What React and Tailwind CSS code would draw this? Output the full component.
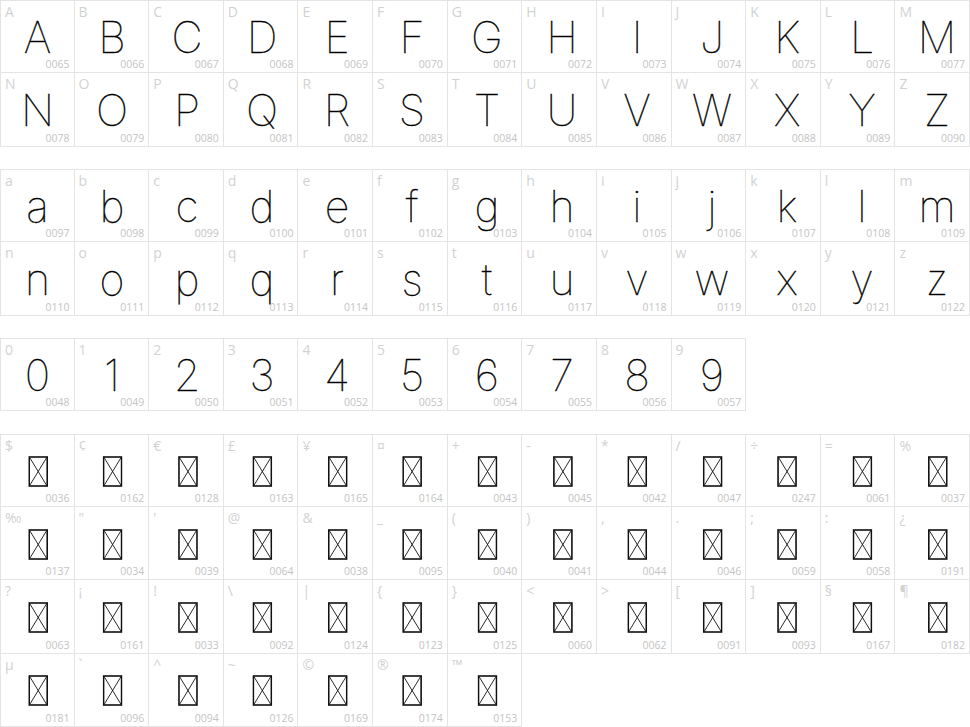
import React from "react";

const upper = "ABCDEFGHIJKLMNOPQRSTUVWXYZ".split("").map((c) => ({ l: c, g: c, code: c.charCodeAt(0) }));
const lower = "abcdefghijklmnopqrstuvwxyz".split("").map((c) => ({ l: c, g: c, code: c.charCodeAt(0) }));
const digits = "0123456789".split("").map((c) => ({ l: c, g: c, code: c.charCodeAt(0) }));
const symbolsRaw = [
  ["$", 36], ["¢", 162], ["€", 128], ["£", 163], ["¥", 165], ["¤", 164], ["+", 43], ["-", 45], ["*", 42], ["/", 47], ["÷", 247], ["=", 61], ["%", 37],
  ["‰", 137], ['"', 34], ["'", 39], ["@", 64], ["&", 38], ["_", 95], ["(", 40], [")", 41], [",", 44], [".", 46], [";", 59], [":", 58], ["¿", 191],
  ["?", 63], ["¡", 161], ["!", 33], ["\\", 92], ["|", 124], ["{", 123], ["}", 125], ["<", 60], [">", 62], ["[", 91], ["]", 93], ["§", 167], ["¶", 182],
  ["µ", 181], ["`", 96], ["^", 94], ["~", 126], ["©", 169], ["®", 174], ["™", 153],
];
const symbols = symbolsRaw.map(([l, code]) => ({ l, g: null, code }));

const pad = (n) => String(n).padStart(4, "0");

function NotDef() {
  return (
    <svg width="20" height="31" viewBox="0 0 20 31" className="block">
      <rect x="1" y="1" width="18" height="29" fill="none" stroke="#111" strokeWidth="1.6" />
      <line x1="1.5" y1="1.5" x2="18.5" y2="29.5" stroke="#111" strokeWidth="0.9" />
      <line x1="18.5" y1="1.5" x2="1.5" y2="29.5" stroke="#111" strokeWidth="0.9" />
    </svg>
  );
}

function Cell({ item, i }) {
  const col = i % 13;
  const row = Math.floor(i / 13);
  return (
    <div
      className={
        "relative flex items-center justify-center border-[#e4e4e4] border-r border-b " +
        (col === 0 ? "border-l " : "") +
        (row === 0 ? "border-t" : "")
      }
    >
      <span className="absolute left-[4px] top-[1px] text-[14px] leading-[20px] text-[#d2d2d2] font-['Open_Sans',sans-serif]">
        {item.l}
      </span>
      <div style={{ transform: `translateX(${(0.2 + 0.385 * col).toFixed(2)}px)` }}>
        {item.g ? (
          <span className="block text-[43px] leading-[38px] text-black pt-[1px] font-['Inter',sans-serif] font-thin [-webkit-text-stroke:0.4px_#000]">
            {item.g}
          </span>
        ) : (
          <div className="pt-[2px] pl-[1px]">
            <NotDef />
          </div>
        )}
      </div>
      <span className="absolute right-[4px] bottom-[2px] text-[10.5px] leading-[12px] text-[#c4c4c4] font-['Open_Sans',sans-serif]">
        {pad(item.code)}
      </span>
    </div>
  );
}

function Block({ items }) {
  return (
    <div className="grid grid-cols-13 auto-rows-[73.25px]">
      {items.map((it, i) => (
        <Cell key={i} item={it} i={i} />
      ))}
    </div>
  );
}

export default function App() {
  return (
    <div className="w-[970px] h-[727px] bg-white flex flex-col gap-[22.5px] overflow-hidden">
      <Block items={upper} />
      <Block items={lower} />
      <Block items={digits} />
      <Block items={symbols} />
    </div>
  );
}
